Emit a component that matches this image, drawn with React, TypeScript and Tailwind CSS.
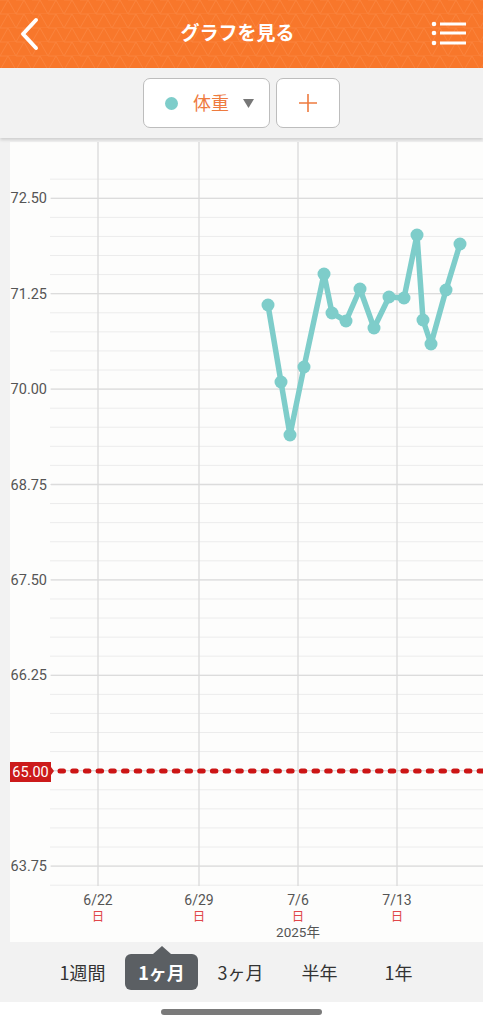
import React from "react";

const FONT = "Roboto, 'Noto Sans CJK JP', 'Noto Sans', sans-serif";

// measured point positions (page coords)
const points: [number, number][] = [
  [268, 305],
  [281, 382],
  [290, 435],
  [304, 367],
  [324, 274],
  [332, 313],
  [346, 321],
  [360, 289],
  [374, 328],
  [389, 297],
  [404, 298],
  [417, 235],
  [423, 320],
  [431, 344],
  [446, 290],
  [460, 244],
];

const majorY = [198.3, 293.7, 389.1, 484.5, 579.9, 675.3, 770.7, 866.1];
const labels = ["72.50", "71.25", "70.00", "68.75", "67.50", "66.25", "65.00", "63.75"];
const days = [
  { x: 98, label: "6/22" },
  { x: 199, label: "6/29" },
  { x: 298, label: "7/6" },
  { x: 397, label: "7/13" },
];

function Header() {
  return (
    <div className="relative h-[68px] bg-[#f8772b] overflow-hidden">
      <svg className="absolute inset-0" width="483" height="68">
        <defs>
          <pattern id="tri" width="16" height="14" patternUnits="userSpaceOnUse">
            <path d="M0 14 L8 0 L16 14" fill="none" stroke="#fb8b48" strokeWidth="1" />
            <path d="M0 14 L16 14" stroke="#fb8b48" strokeWidth="1" />
            <path d="M8 0 L0 0" stroke="#fb8b48" strokeWidth="1" />
          </pattern>
        </defs>
        <rect width="483" height="68" fill="url(#tri)" opacity="0.6" />
      </svg>
      <div className="relative flex h-full items-center justify-between px-4">
        <svg width="28" height="36" viewBox="0 0 28 36">
          <path d="M20 4 L7 18 L20 32" fill="none" stroke="#fff" strokeWidth="4" strokeLinecap="round" strokeLinejoin="round" />
        </svg>
        <div className="text-white text-[19px] font-bold" style={{ fontFamily: FONT }}>
          グラフを見る
        </div>
        <svg width="36" height="28" viewBox="0 0 36 28">
          <circle cx="3" cy="4" r="2.3" fill="#fff" />
          <circle cx="3" cy="13" r="2.3" fill="#fff" />
          <circle cx="3" cy="23" r="2.3" fill="#fff" />
          <path d="M9 4 H35 M9 13 H35 M9 23 H35" stroke="#fff" strokeWidth="3" />
        </svg>
      </div>
    </div>
  );
}

function Toolbar() {
  return (
    <div className="relative z-10 flex h-[70px] items-center justify-center gap-[6px] bg-[#f2f2f2] shadow-[0_2px_3px_rgba(0,0,0,0.15)]">
      <div className="flex h-[50px] w-[127px] items-center rounded-[7px] border border-[#bdbdbd] bg-white pl-[21px]">
        <div className="h-[13px] w-[13px] rounded-full bg-[#7ecdca]" />
        <span className="ml-[15px] text-[18px] text-[#ee7b3f]" style={{ fontFamily: FONT }}>
          体重
        </span>
        <svg className="ml-[14px]" width="11" height="9" viewBox="0 0 11 9">
          <path d="M0 0 H11 L5.5 9 Z" fill="#777" />
        </svg>
      </div>
      <div className="flex h-[50px] w-[64px] items-center justify-center rounded-[7px] border border-[#bdbdbd] bg-white">
        <svg width="20" height="20" viewBox="0 0 20 20">
          <path d="M10 1 V19 M1 10 H19" stroke="#ee7b3f" strokeWidth="1.6" />
        </svg>
      </div>
    </div>
  );
}

function Chart() {
  const minor: number[] = [];
  for (let y = 179.2; y < 890; y += 19.08) minor.push(y);
  const path = points.map((p, i) => (i === 0 ? "M" : "L") + p[0] + " " + p[1]).join(" ");

  return (
    <div className="ml-[10px] h-[800px] bg-[#fdfdfc]">
      <svg width="473" height="800" viewBox="10 142 473 800" style={{ fontFamily: FONT }}>
        {minor.map((y) => (
          <line key={y} x1="50" x2="483" y1={y} y2={y} stroke="#ececec" strokeWidth="1" />
        ))}
        {majorY.map((y) => (
          <line key={y} x1="51" x2="483" y1={y} y2={y} stroke="#dcdcdc" strokeWidth="1.3" />
        ))}
        {days.map((d) => (
          <line key={d.x} x1={d.x} x2={d.x} y1="142" y2="886" stroke="#dadada" strokeWidth="1.3" />
        ))}
        {labels.map((l, i) =>
          i === 6 ? null : (
            <text key={l} x="47" y={majorY[i] + 5} textAnchor="end" fontSize="14.5" fill="#555">
              {l}
            </text>
          )
        )}

        <line x1="60" x2="483" y1="771" y2="771" stroke="#cc1515" strokeWidth="5" strokeDasharray="3.5 9.2" strokeLinecap="round" />
        <rect x="10" y="762" width="41" height="20" fill="#cc1b1b" />
        <path d="M51 767 L54 771 L51 775 Z" fill="#cc1b1b" />
        <text x="30.5" y="777" textAnchor="middle" fontSize="14.5" fill="#fff">
          65.00
        </text>

        <path d={path} fill="none" stroke="#7ecdca" strokeWidth="5.5" strokeLinejoin="round" />
        {points.map((p, i) => (
          <circle key={i} cx={p[0]} cy={p[1]} r="6.5" fill="#7ecdca" />
        ))}

        {days.map((d) => (
          <g key={d.label}>
            <text x={d.x} y="905" textAnchor="middle" fontSize="14" fill="#555">
              {d.label}
            </text>
            <text x={d.x} y="921" textAnchor="middle" fontSize="12.5" fill="#e0474a">
              日
            </text>
          </g>
        ))}
        <text x="298" y="937" textAnchor="middle" fontSize="13.5" fill="#555">
          2025年
        </text>
      </svg>
    </div>
  );
}

function Tabs() {
  const tabs = ["1週間", "1ヶ月", "3ヶ月", "半年", "1年"];
  return (
    <div className="flex h-[60px] items-center justify-center bg-[#f2f2f2] pr-[2px]" style={{ fontFamily: "'Noto Sans CJK JP', sans-serif" }}>
      {tabs.map((t, i) =>
        i === 1 ? (
          <div key={t} className="relative mx-[3px] flex h-[36px] w-[73px] items-center justify-center rounded-[6px] bg-[#5b5f63] text-[18px] font-bold text-white">
            <div className="absolute left-1/2 top-[-8px] h-0 w-0 -translate-x-1/2 border-x-[9px] border-b-[8px] border-x-transparent border-b-[#5b5f63]" />
            {t}
          </div>
        ) : (
          <div key={t} className="flex w-[79px] items-center justify-center text-[18px] text-[#333]">
            {t}
          </div>
        )
      )}
    </div>
  );
}

export default function App() {
  return (
    <main className="min-h-screen w-[483px] bg-[#f2f2f2]">
      <Header />
      <Toolbar />
      <div className="pt-[4px]">
        <Chart />
      </div>
      <Tabs />
      <div className="flex h-[22px] justify-center bg-white pt-[7px]">
        <div className="h-[6px] w-[161px] rounded-full bg-[#7a7a7a]" />
      </div>
    </main>
  );
}
